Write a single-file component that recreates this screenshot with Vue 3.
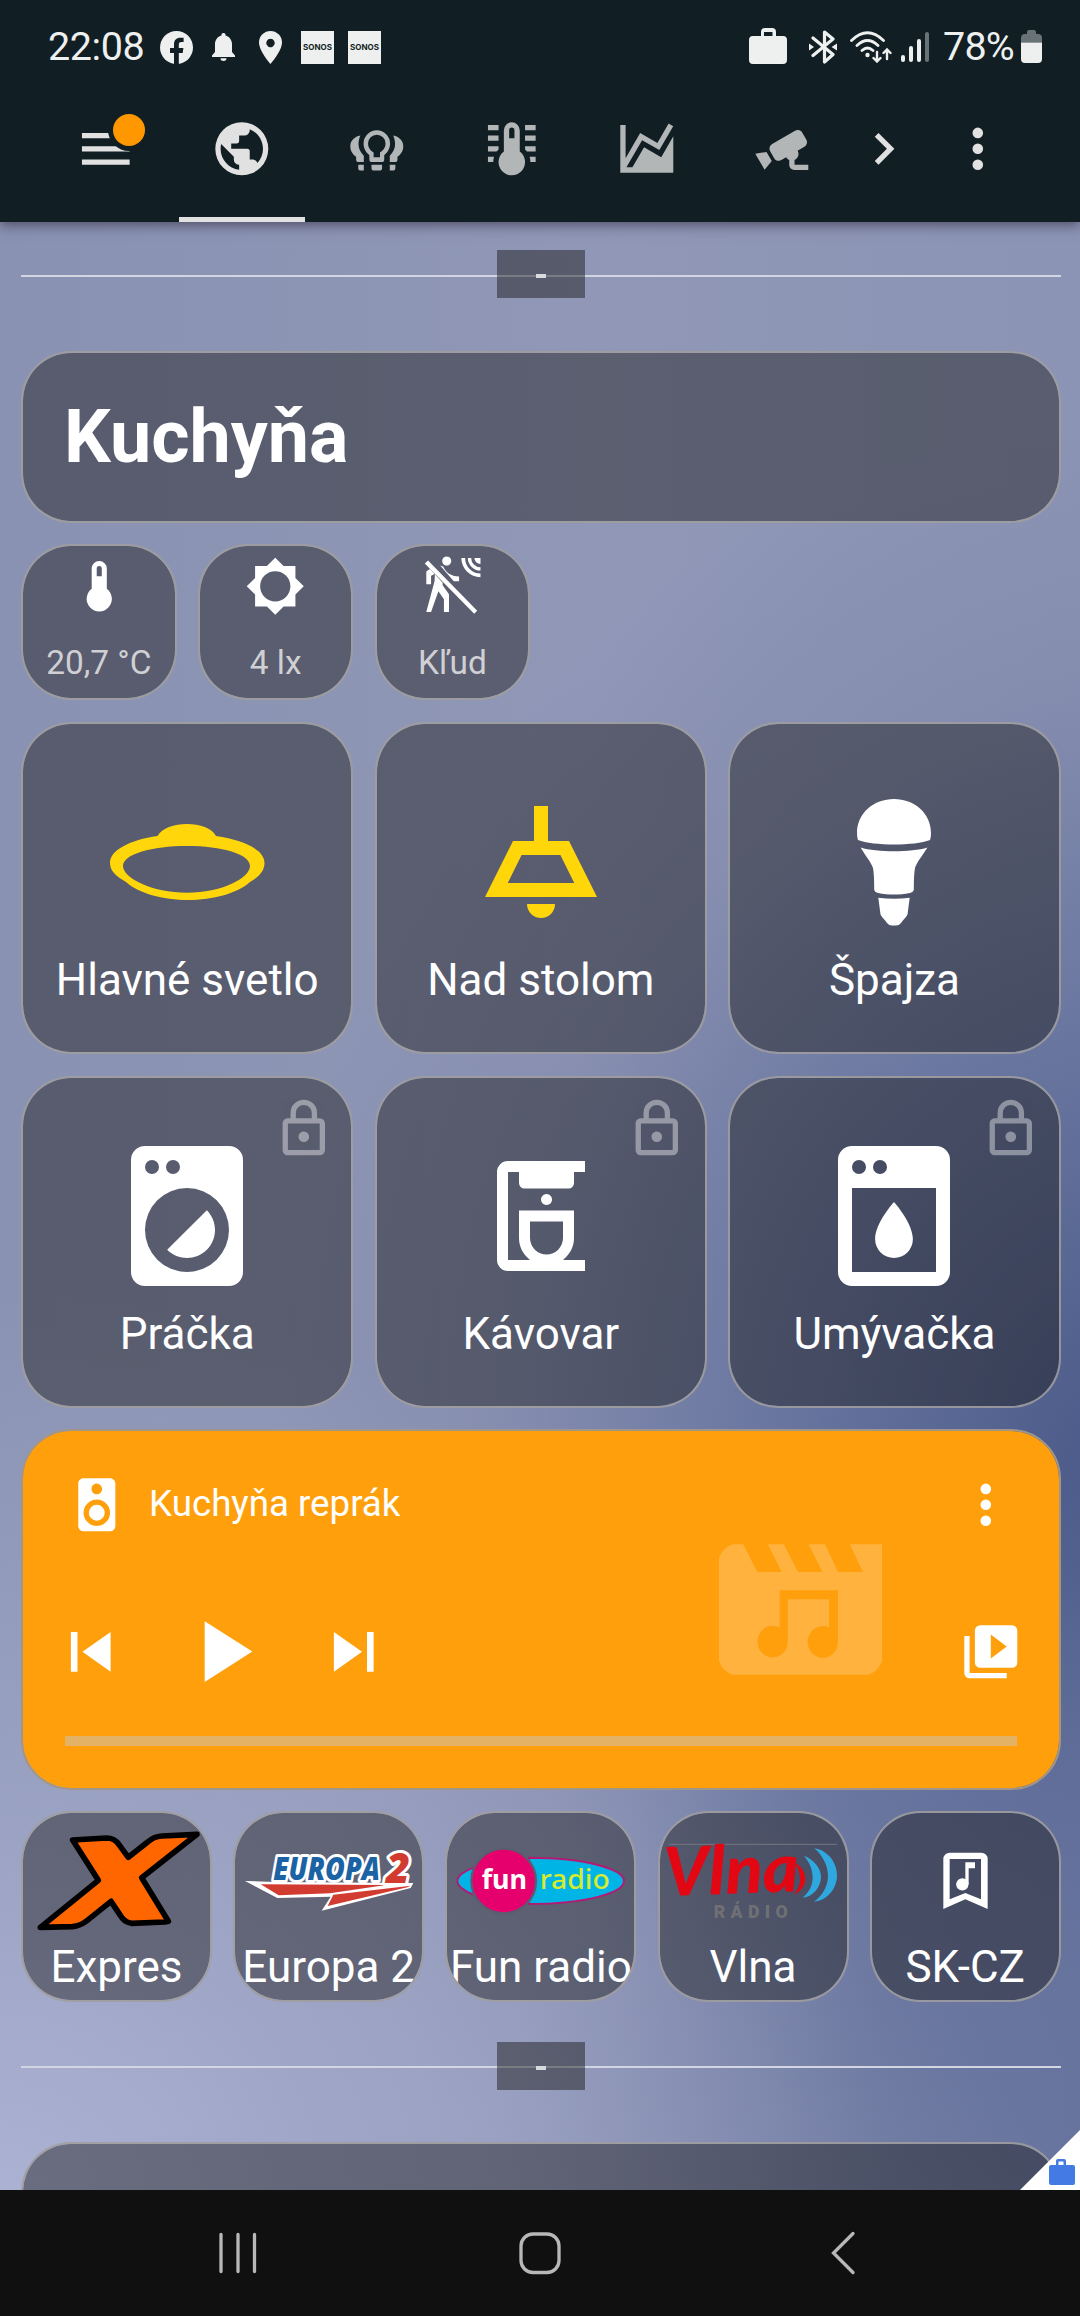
<script setup>
const icons = {
  menu: 'M3,6H21V8H3V6M3,11H21V13H3V11M3,16H21V18H3V16Z',
  earth: 'M17.9,17.39C17.64,16.59 16.89,16 16,16H15V13A1,1 0 0,0 14,12H8V10H10A1,1 0 0,0 11,9V7H13A2,2 0 0,0 15,5V4.59C17.93,5.77 20,8.64 20,12C20,14.08 19.2,15.97 17.9,17.39M11,19.93C7.05,19.44 4,16.08 4,12C4,11.38 4.08,10.78 4.21,10.21L9,15V16A2,2 0 0,0 11,18M12,2A10,10 0 0,0 2,12A10,10 0 0,0 12,22A10,10 0 0,0 22,12A10,10 0 0,0 12,2Z',
  bulbs: 'M12,5A5,5 0 0,0 7,10C7,12 8,13.4 9.2,14.4V16Q9.2,17 10.2,17H13.8Q14.8,17 14.8,16V14.4C16,13.4 17,12 17,10A5,5 0 0,0 12,5M12,6.7A3.3,3.3 0 0,1 15.3,10C15.3,11.6 14.3,12.7 13.2,13.4V15.2H10.8V13.4C9.7,12.7 8.7,11.6 8.7,10A3.3,3.3 0 0,1 12,6.7M10,18H14V19.2Q14,20.2 13,20.2H11Q10,20.2 10,19.2ZM5.8,7C3.6,7.4 2,9 2,11C2,13 3.2,14.3 4.2,15V16Q4.2,17 5.2,17H7.1V14.6C5.8,13.2 5.1,12 5.1,10.2C5.1,9 5.4,8 5.8,7M18.2,7C20.4,7.4 22,9 22,11C22,13 20.8,14.3 19.8,15V16Q19.8,17 18.8,17H16.9V14.6C18.2,13.2 18.9,12 18.9,10.2C18.9,9 18.6,8 18.2,7M5,18H7.1V20.2H6Q5,20.2 5,19.2ZM16.9,18H19V19.2Q19,20.2 18,20.2H16.9Z',
  thermoLines: 'M17,3H21V5H17V3M17,7H21V9H17V7M17,11H21V13H17.75L17,12.25V11M21,15V17H19C19,16.31 18.9,15.63 18.71,15H21M3,3H7V5H3V3M3,7H7V9H3V7M3,11H7V12.25L6.25,13H3V11M3,15H5.29C5.1,15.63 5,16.31 5,17H3V15M15,13V5A3,3 0 0,0 9,5V13A5,5 0 1,0 15,13M12,4A1,1 0 0,1 13,5V8H11V5A1,1 0 0,1 12,4Z',
  chart: 'M17.45,15.18L22,7.31V21H2V3H4V15.54L9.5,6L16,9.78L20.24,2.45L21.97,3.45L16.74,12.5L10.23,8.75L4.31,19H6.57L10.96,11.44L17.45,15.18Z',
  cctv: 'M18.15,4.94C17.77,4.91 17.37,5 17,5.2L8.35,10.2C7.39,10.76 7.07,12 7.62,12.94L9.12,15.53C9.67,16.5 10.89,16.82 11.85,16.27L13.65,15.23C13.92,15.69 14.32,16.06 14.81,16.27V18.04C14.81,19.13 15.7,20 16.81,20H22V18.04H16.81V16.27C17.72,15.87 18.31,14.97 18.31,14C18.31,13.54 18.19,13.11 17.97,12.73L20.5,11.27C21.47,10.71 21.8,9.5 21.24,8.53L19.74,5.94C19.4,5.34 18.79,5 18.15,4.94M6.22,13.17L2,13.87L2.75,15.17L4.75,18.63L5.5,19.93L8.22,16.63L6.22,13.17Z',
  chevron: 'M8.59,16.58L13.17,12L8.59,7.41L10,6L16,12L10,18L8.59,16.58Z',
  dots: 'M12,16A2,2 0 0,1 14,18A2,2 0 0,1 12,20A2,2 0 0,1 10,18A2,2 0 0,1 12,16M12,10A2,2 0 0,1 14,12A2,2 0 0,1 12,14A2,2 0 0,1 10,12A2,2 0 0,1 12,10M12,4A2,2 0 0,1 14,6A2,2 0 0,1 12,8A2,2 0 0,1 10,6A2,2 0 0,1 12,4Z',
  thermometer: 'M15,13V5A3,3 0 0,0 9,5V13A5,5 0 1,0 15,13M12,4A1,1 0 0,1 13,5V8H11V5A1,1 0 0,1 12,4Z',
  brightness: 'M12,18A6,6 0 0,1 6,12A6,6 0 0,1 12,6A6,6 0 0,1 18,12A6,6 0 0,1 12,18M20,15.31L23.31,12L20,8.69V4H15.31L12,0.69L8.69,4H4V8.69L0.69,12L4,15.31V20H8.69L12,23.31L15.31,20H20V15.31Z',
  motionOff: 'M9.8,0.2A1.8,1.8 0 1,0 9.81,0.2ZM2.4,1.8L21.9,21.7L20.7,22.9L1.1,3ZM3.1,5.2L5,7.1L3.6,7.8V11.2H1.7V6.1ZM5.1,7.2L8.2,10.6V11.6L10.7,15.2V22.2H8.7V17.2L6.5,14L3.6,22.2H1.7L5,9.9ZM7.2,3.8L8.4,4.2C9.5,6.6 11.4,8.1 14.7,8.1V10H12.6ZM15.6,0.8A7.6,7.6 0 0,0 23.2,8.4V6.9A6.1,6.1 0 0,1 17.1,0.8ZM18.2,0.8A5,5 0 0,0 23.2,5.8V4.5A3.7,3.7 0 0,1 19.5,0.8ZM20.8,0.8A2.4,2.4 0 0,0 23.2,3.2V0.8Z',
  ceiling: 'M8,9H11V4H13V9H16L20,17H4L8,9M9.23,11L7.25,15H16.75L14.77,11H9.23M10,18H14A2,2 0 0,1 10,18Z',
  washer: 'M14.83,11.17C16.39,12.73 16.39,15.27 14.83,16.83C13.27,18.39 10.73,18.39 9.17,16.83L14.83,11.17M6,2H18A2,2 0 0,1 20,4V20A2,2 0 0,1 18,22H6A2,2 0 0,1 4,20V4A2,2 0 0,1 6,2M7,4A1,1 0 0,0 6,5A1,1 0 0,0 7,6A1,1 0 0,0 8,5A1,1 0 0,0 7,4M10,4A1,1 0 0,0 9,5A1,1 0 0,0 10,6A1,1 0 0,0 11,5A1,1 0 0,0 10,4M12,8A6,6 0 0,0 6,14A6,6 0 0,0 12,20A6,6 0 0,0 18,14A6,6 0 0,0 12,8Z',
  coffee: 'M20,4V2H6A2,2 0 0,0 4,4V20A2,2 0 0,0 6,22H20V20H16C17.2,19 18,17.7 18,16V11H8V16C8,17.7 8.8,19 10,20H6V4H8V6A1,1 0 0,0 9,7H17A1,1 0 0,0 18,6V4H20ZM10,13H16V16A3,3 0 0,1 10,16V13M13,8A1,1 0 1,0 13.01,8Z',
  dishwasher: 'M18,2H6A2,2 0 0,0 4,4V20A2,2 0 0,0 6,22H18A2,2 0 0,0 20,20V4A2,2 0 0,0 18,2M10,4A1,1 0 0,1 11,5A1,1 0 0,1 10,6A1,1 0 0,1 9,5A1,1 0 0,1 10,4M7,4A1,1 0 0,1 8,5A1,1 0 0,1 7,6A1,1 0 0,1 6,5A1,1 0 0,1 7,4M18,20H6V8H18V20M12,10C12,10 9.3,13 9.3,15.3A2.7,2.7 0 0,0 14.7,15.3C14.7,13 12,10 12,10Z',
  lock: 'M12,17A2,2 0 0,1 10,15C10,13.89 10.89,13 12,13A2,2 0 0,1 14,15A2,2 0 0,1 12,17M18,20V10H6V20H18M18,8A2,2 0 0,1 20,10V20A2,2 0 0,1 18,22H6C4.89,22 4,21.1 4,20V10C4,8.89 4.89,8 6,8H7V6A5,5 0 0,1 12,1A5,5 0 0,1 17,6V8H18M12,3A3,3 0 0,0 9,6V8H15V6A3,3 0 0,0 12,3Z',
  speaker: 'M12,12A3,3 0 0,0 9,15A3,3 0 0,0 12,18A3,3 0 0,0 15,15A3,3 0 0,0 12,12M12,20A5,5 0 0,1 7,15A5,5 0 0,1 12,10A5,5 0 0,1 17,15A5,5 0 0,1 12,20M12,4A2,2 0 0,1 14,6A2,2 0 0,1 12,8C10.89,8 10,7.1 10,6C10,4.89 10.89,4 12,4M17,2H7C5.89,2 5,2.89 5,4V20A2,2 0 0,0 7,22H17A2,2 0 0,0 19,20V4C19,2.89 18.1,2 17,2Z',
  prev: 'M6,18V6H8V18H6M9.5,12L18,6V18L9.5,12Z',
  play: 'M8,5.14V19.14L19,12.14L8,5.14Z',
  next: 'M16,18H18V6H16M6,18L14.5,12L6,6V18Z',
  library: 'M4,6H2V20A2,2 0 0,0 4,22H18V20H4V6M20,2H8A2,2 0 0,0 6,4V16A2,2 0 0,0 8,18H20A2,2 0 0,0 22,16V4A2,2 0 0,0 20,2M12,14.5V5.5L18,10L12,14.5Z',
}

const tabs = [
  { icon: icons.earth, active: true },
  { icon: icons.bulbs },
  { icon: icons.thermoLines },
  { icon: icons.chart },
  { icon: icons.cctv },
]

const chips = [
  { icon: icons.thermometer, label: '20,7 °C' },
  { icon: icons.brightness, label: '4 lx' },
  { icon: icons.motionOff, label: 'Kľud' },
]

const tiles = [
  { kind: 'oval', label: 'Hlavné svetlo', on: true },
  { icon: icons.ceiling, label: 'Nad stolom', on: true },
  { kind: 'spot', label: 'Špajza' },
  { icon: icons.washer, label: 'Práčka', locked: true },
  { icon: icons.coffee, label: 'Kávovar', locked: true, small: true },
  { icon: icons.dishwasher, label: 'Umývačka', locked: true },
]

const stations = [
  { id: 'expres', label: 'Expres', box: '70 39 561 378' },
  { id: 'europa', label: 'Europa 2', box: '705 39 561 378' },
  { id: 'fun', label: 'Fun radio', box: '82 39 561 378' },
  { id: 'vlna', label: 'Vlna', box: '720 39 561 378' },
  { id: 'skcz', label: 'SK-CZ', box: '126 39 561 378' },
]
</script>

<template>
  <div class="screen">
    <header class="top">
      <div class="status">
        <span class="clock">22:08</span>
        <svg class="s-fb" viewBox="0 0 33 33"><circle cx="16.5" cy="16.5" r="16.5" fill="#eef0f0" /><path d="M14 34V22H10V17H14V13.5C14 9 16.5 6.8 20.3 6.8H23.6V11H21.5C19.3 11 18.8 12 18.8 13.8V17H23.4L22.7 22H18.8V34Z" fill="#111e23" /></svg>
        <svg class="s-bell" viewBox="0 0 23 28"><path d="M11.5 0A2 2 0 0 1 13.5 2.4C17.5 3.4 20 7 20 11V19L23 22.5V24H0V22.5L3 19V11C3 7 5.500 3.400 9.500 2.400A2 2 0 0 1 11.500 0ZM8.500 25.300H14.500A3 2.700 0 0 1 8.500 25.300Z" /></svg>
        <svg class="s-pin" viewBox="0 0 23 33"><path d="M11.500 0A11.500 11.500 0 0 0 0 11.500C0 20 11.500 33 11.500 33S23 20 23 11.500A11.500 11.500 0 0 0 11.500 0ZM11.500 7.800A4.200 4.200 0 1 1 11.490 7.800Z" fill-rule="evenodd" /></svg>
        <span v-for="n in 2" :key="n" class="sonos"><svg viewBox="0 0 33 33"><text x="2" y="19.200" textLength="29" lengthAdjust="spacingAndGlyphs">SONOS</text></svg></span>
        <span class="grow"></span>
        <svg class="s-case" viewBox="0 0 38 36"><path d="M4 8H12V4Q12 0 16 0H23Q27 0 27 4V8H34Q38 8 38 12V32Q38 36 34 36H4Q0 36 0 32V12Q0 8 4 8ZM15 8H23.500V4H15Z" fill-rule="evenodd" /></svg>
        <svg class="s-bt" viewBox="0 0 28 34"><path d="M4 8L24 24.500L15.500 32V2L24 9L4 25.500" fill="none" stroke="#eef0f0" stroke-width="3.200" stroke-linejoin="round" stroke-linecap="round" /><path d="M0 13.500L5 17L0 20.500ZM28 13.500L22.500 17L28 20.500Z" /></svg>
        <svg class="s-wifi" viewBox="0 0 42 32"><g fill="none" stroke="#eef0f0" stroke-width="2.800" stroke-linecap="round"><path d="M1.500 9.500Q17.500 -6 33.500 9.500M7 14.500Q17.500 4.500 28 14.500M12 19.500Q17.500 14.500 23 19.500" /><path d="M27 21V30M23.500 27L27 30.500L30.500 27M37 28V19M33.500 22L37 18.500L40.500 22" stroke-width="2.400" /></g><circle cx="17.500" cy="24" r="2.200" /></svg>
        <svg class="s-sig" viewBox="0 0 28 30"><rect y="23" width="4" height="7" rx="2" /><rect x="8" y="14" width="4" height="16" rx="2" /><rect x="16" y="7" width="4" height="23" rx="2" /><rect x="24" width="4" height="30" rx="2" opacity=".4" /></svg>
        <span class="pct">78%</span>
        <svg class="s-bat" viewBox="0 0 21 33"><path d="M6 2Q6 0 8 0H13Q15 0 15 2V4H17Q21 4 21 8V12.500H0V8Q0 4 4 4H6Z" opacity=".4" /><path d="M0 12.500H21V29Q21 33 17 33H4Q0 33 0 29Z" /></svg>
      </div>
      <nav class="tabs">
        <div class="menu"><svg class="ic" viewBox="0 0 24 24"><path :d="icons.menu" /></svg><i class="badge"></i></div>
        <div v-for="(t, i) in tabs" :key="i" class="tab" :class="{ active: t.active }"><svg class="ic" viewBox="0 0 24 24"><path :d="t.icon" /></svg></div>
        <div class="tool"><svg class="ic" viewBox="0 0 24 24"><path :d="icons.chevron" /></svg></div>
        <div class="tool"><svg class="ic" viewBox="0 0 24 24"><path :d="icons.dots" /></svg></div>
      </nav>
    </header>

    <main class="page">
      <div class="divider"><span><i></i></span></div>
      <section class="card title">Kuchyňa</section>
      <section class="chips">
        <div v-for="c in chips" :key="c.label" class="card chip">
          <svg viewBox="0 0 24 24"><path :d="c.icon" /></svg>
          <span>{{ c.label }}</span>
        </div>
      </section>
      <section class="tiles">
        <div v-for="t in tiles" :key="t.label" class="card tile" :class="{ on: t.on }">
          <div class="pic">
            <svg v-if="t.kind === 'oval'" width="155" height="76" viewBox="110 824 155 76"><path fill-rule="evenodd" d="M157.500 836C162 828 174 824 187 824C200 824 212 828 216 836C244 840 264.500 850 264.500 863C264.500 871 259 877 250 882C238 893 213 900 188 900C163 900 138 893 126 882C116 876 110 871 110 863C110 850 130 840 157.500 836ZM123 866C123 854 152 846 187 846C222 846 250 854 250 866C250 878 222 892.700 187 892.700C152 892.700 123 878 123 866Z" /></svg>
            <svg v-else-if="t.kind === 'spot'" width="74" height="128" viewBox="0 0 74 128"><path d="M1 42Q0 40 0 35C0 15 17 1 37 1C57 1 74 15 74 35Q74 40 73 42C58 48 16 48 1 42ZM3.600 49.500C20 54.500 54 54.500 70.500 49.500C65 58 60 64 58 70Q56.800 76 56.800 92Q56 94.500 53 95C42 97 32 97 21 95Q18 94.500 17.200 92Q17.200 76 16 70C14 64 8.600 58 3.600 49.500ZM21.300 99.800Q37 101.500 52.700 99.800L50.500 116.500C49 120 46 121.500 44 125Q42 127.500 39 127.500H35Q32 127.500 30 125C28 121.500 25 120 23.500 116.500Z" /></svg>
            <svg v-else :width="t.small ? 132 : 168" :height="t.small ? 132 : 168" viewBox="0 0 24 24"><path :d="t.icon" fill-rule="evenodd" /></svg>
          </div>
          <span>{{ t.label }}</span>
          <svg v-if="t.locked" class="lock" viewBox="0 0 24 24"><path :d="icons.lock" /></svg>
        </div>
      </section>

      <section class="card media">
        <svg class="art" viewBox="2 4 20 16"><path fill-rule="evenodd" d="M3.700,4H4.960L6.700,7.400H9.700L8,4H9.940L11.700,7.400H14.700L13,4H15L16.600,7.400H19.660L18.050,4H22V18.300Q21.600,19.600 20.300,20H3.700Q2.400,19.600 2,18.300V5.700Q2.400,4.400 3.700,4ZM9.440,9.640H16.600V16A1.860,1.950 0 1 1 15.500,14.200V10.750H10.450V16A1.860,1.950 0 1 1 9.440,14.200Z" /></svg>
        <div class="m-head">
          <svg class="ic" viewBox="0 0 24 24"><path :d="icons.speaker" /></svg>
          <span>Kuchyňa reprák</span>
          <svg class="ic" viewBox="0 0 24 24"><path :d="icons.dots" /></svg>
        </div>
        <div class="m-ctl">
          <svg width="79.500" height="79.500" viewBox="0 0 24 24"><path :d="icons.prev" /></svg>
          <svg class="m-play" width="104" height="104" viewBox="0 0 24 24"><path :d="icons.play" /></svg>
          <svg width="79.500" height="79.500" viewBox="0 0 24 24"><path :d="icons.next" /></svg>
          <svg class="ic m-lib" viewBox="0 0 24 24"><path :d="icons.library" /></svg>
        </div>
        <div class="m-bar"></div>
      </section>

      <section class="stations">
        <div v-for="s in stations" :key="s.id" class="card station">
          <svg :viewBox="s.box">
            <g v-if="s.id === 'expres'">
              <path d="M219 120L320 114Q345 114 358 134L386 172L444 126Q462 110 486 108L592 103L426 233L506 364L496 366L395 370Q372 366 362 346L334 304L262 362Q242 378 218 380L122 382L296 241Z" fill="#f60" stroke="#000" stroke-width="17" stroke-linejoin="round" />
            </g>
            <g v-else-if="s.id === 'europa'">
              <path d="M735 243L826 246L1240 249L1232 264L965 332L992 290L832 294Z" fill="#fff" />
              <path d="M782 253L1158 255L990 280L836 286ZM1000 284L1232 257L1222 262L983 318Z" fill="#d23b30" />
              <g class="eu" paint-order="stroke" stroke="#fff" stroke-linejoin="round">
                <text x="820" y="240" font-size="96" textLength="320" lengthAdjust="spacingAndGlyphs" fill="#1b63a5" stroke-width="18">EUROPA</text>
                <text x="1158" y="249" font-size="125" textLength="72" lengthAdjust="spacingAndGlyphs" fill="#d23b30" stroke-width="18">2</text>
              </g>
            </g>
            <g v-else-if="s.id === 'fun'">
              <path d="M113 243C113 228 135 212 162 203V284C135 275 113 258 113 243ZM328 173C500 173 613 208 613 243C613 278 500 312 328 312Z" fill="#00b5e5" stroke="#b31b73" stroke-width="6" />
              <circle cx="252" cy="243" r="97" fill="#e6006d" stroke="#5a5d70" stroke-width="7" />
              <text class="fun" x="186" y="267" font-size="82" font-weight="700" textLength="136" lengthAdjust="spacingAndGlyphs" fill="#fff">fun</text>
              <text class="fun" x="360" y="267" font-size="80" font-weight="500" textLength="210" lengthAdjust="spacingAndGlyphs" fill="#d7eb2e">radio</text>
            </g>
            <g v-else-if="s.id === 'vlna'">
              <path d="M747 133H1251" stroke="#75767d" stroke-width="3" />
              <text class="vlna" transform="translate(734 288) rotate(-2)" font-size="202" textLength="404" lengthAdjust="spacingAndGlyphs">Vlna</text>
              <path d="M1122 186Q1156 206 1156 238Q1154 270 1122 284Q1144 256 1140 232Q1138 206 1122 186Z" fill="#e30613" />
              <path d="M1152 167C1184 180 1203 206 1203 230C1203 260 1180 290 1148 293C1168 276 1178 256 1178 232C1178 208 1168 186 1152 167ZM1183 145C1226 152 1251 190 1251 226C1251 266 1222 302 1182 305C1208 286 1224 258 1224 228C1224 198 1208 166 1183 145Z" fill="#2fa8e0" />
              <text class="radio" x="881" y="353" font-size="53" textLength="222">RÁDIO</text>
            </g>
            <g v-else fill="#fff">
              <path fill-rule="evenodd" d="M340 327V177A19 19 0 0 1 359 158H454A19 19 0 0 1 473 177V327L406 298ZM359 177V298L406 279L453 298V177Z" />
              <circle cx="397" cy="253" r="18.500" /><path d="M406 187H435V205H416V253H406Z" />
            </g>
          </svg>
          <span>{{ s.label }}</span>
        </div>
      </section>
      <div class="divider second"><span><i></i></span></div>
      <section class="card title"></section>
      <div class="corner"><svg viewBox="0 0 60 60"><path d="M60 0V60H0Z" fill="#fff" /><path fill="#437ae4" fill-rule="evenodd" d="M31 35H36V31Q36 29 38 29H44Q46 29 46 31V35H53Q55 35 55 37V53Q55 55 53 55H31Q29 55 29 53V37Q29 35 31 35ZM38.500 35H43.500V31.500H38.500Z" /></svg></div>
    </main>

    <footer class="navbar">
      <svg viewBox="0 0 1080 126"><g fill="none" stroke="#b8b8b8" stroke-width="3.300" stroke-linecap="round"><path d="M221 44.500V81.500M238 44.500V81.500M254.500 44.500V81.500" /><rect x="521" y="44" width="38" height="38.500" rx="12" /><path d="M853 43.500L833.500 63L853 82.500" /></g></svg>
    </footer>
  </div>
</template>

<style>
body { margin: 0; }
</style>

<style scoped>
.screen {
  width: 1080px;
  height: 2316px;
  display: flex;
  flex-direction: column;
  overflow: hidden;
  font-family: Roboto, "Noto Sans", sans-serif;
  color: #fff;
}
.screen * { box-sizing: border-box; }
svg { display: block; fill: currentColor; flex: none; }
.ic { width: 63.6px; height: 63.6px; }

.top { height: 222px; flex: none; background: #111e23; color: #e1e1e1; position: relative; z-index: 2; box-shadow: 0 3px 12px rgba(40, 30, 50, .6); }
.status { height: 74px; padding: 20px 38px 0 48px; display: flex; align-items: flex-start; color: #eef0f0; }
.clock, .pct { font-size: 39.5px; line-height: 53px; letter-spacing: -.6px; white-space: nowrap; }
.clock { width: 112px; letter-spacing: -.4px; }
.pct { width: 78px; margin-left: 14px; letter-spacing: -.8px; }
.grow { flex: 1; }
.s-fb { width: 33px; height: 33px; margin-top: 11px; }
.s-bell { width: 23px; height: 28px; margin: 13px 0 0 19px; }
.s-pin { width: 23px; height: 33px; margin: 11px 0 0 24px; }
.sonos { width: 33px; height: 33px; margin: 11px 0 0 18.5px; background: #eef0f0; }
.sonos + .sonos { margin-left: 14px; }
.sonos text { font: 700 7.5px Inter, sans-serif; fill: #111e23; }
.s-case { width: 38px; height: 36px; margin: 8px 22px 0 0; }
.s-bt { width: 28px; height: 34px; margin: 10px 13px 0 0; }
.s-wifi { width: 42px; height: 32px; margin: 11px 9px 0 0; }
.s-sig { width: 28px; height: 30px; margin-top: 12px; }
.s-bat { width: 21px; height: 33px; margin-top: 10px; }

.tabs { height: 149px; display: grid; grid-template-columns: 173.8px repeat(5, 135.2px) 68px 119.6px; }
.tabs > div { display: flex; align-items: center; justify-content: center; position: relative; height: 149px; }
.tabs .menu { padding-left: 37.6px; }
.badge { position: absolute; left: 113px; top: 40px; width: 32px; height: 32px; border-radius: 50%; background: #ff9800; box-shadow: 0 0 0 5px #111e23; }
.tab svg { opacity: .78; }
.tab.active svg { opacity: 1; }
.tab.active::after { content: ""; position: absolute; left: 5px; bottom: 1px; width: 126px; height: 5px; background: #e1e1e1; }

.page {
  height: 1968px;
  flex: none;
  position: relative;
  overflow: hidden;
  padding: 28px 19.3px 0 21px;
  background:
    radial-gradient(ellipse 900px 950px at 0 2010px, #adb3d4 0%, rgba(173, 179, 212, .5) 42%, rgba(173, 179, 212, 0) 100%),
    radial-gradient(ellipse 620px 560px at 1120px 1920px, rgba(94, 108, 152, .75) 0%, rgba(94, 108, 152, .4) 50%, rgba(94, 108, 152, 0) 100%),
    radial-gradient(ellipse 860px 1040px at 1120px 1240px, #4a5988 0%, rgba(80, 96, 144, .6) 40%, rgba(110, 118, 158, .24) 74%, rgba(130, 138, 172, 0) 100%),
    linear-gradient(90deg, #8992b2 0%, #9097b7 55%, #8b94b4 100%);
}
.card {
  position: relative;
  border: 2px solid rgba(160, 157, 158, .85);
  border-radius: 50px;
  background: rgba(26, 26, 26, .45);
  background-clip: padding-box;
  overflow: hidden;
}
.divider { height: 48px; display: flex; justify-content: center; background: linear-gradient(#d2d6e2, #d2d6e2) 0 25px / 100% 2px no-repeat; }
.divider span { width: 88px; display: flex; align-items: center; justify-content: center; background: rgba(26, 26, 26, .48); }
.divider i { width: 10px; height: 4.5px; margin-top: 4px; background: #d9dadd; }
.divider.second { margin-top: 40px; background-position: 0 24px; }
.title { height: 172.500px; margin-top: 52.5px; padding: 0 41px; font-size: 73.6px; font-weight: 700; line-height: 169px; }
.divider.second + .title { margin-top: 52px; }

.chips { display: grid; grid-template-columns: repeat(6, 1fr); gap: 21.2px; margin-top: 21.3px; }
.chip { height: 156px; display: flex; flex-direction: column; align-items: center; padding-top: 9.3px; }
.chip svg { width: 60.5px; height: 60.5px; }
.chip span { margin-top: 26.5px; font-size: 33.4px; line-height: 40px; color: #d0d0d4; white-space: nowrap; }

.tiles { display: grid; grid-template-columns: repeat(3, 1fr); gap: 21.2px; margin-top: 21.4px; }
.tile { height: 332.8px; display: flex; flex-direction: column; align-items: center; padding-top: 54px; }
.pic { height: 168px; display: flex; align-items: center; }
.tile.on .pic { color: #ffd60a; }
.tile span, .station span { font-size: 44px; line-height: 52px; white-space: nowrap; }
.tile span { margin-top: 8.500px; }
.lock { position: absolute; right: 16px; top: 19.5px; width: 63.6px; height: 63.6px; opacity: .4; }

.media { height: 360.5px; margin-top: 21px; padding: 41.5px 41.5px 0; background-color: #ff9f0c; border-color: #a29689; }
.m-head { display: flex; align-items: center; height: 64px; }
.m-head span { flex: 1; margin: -3px 0 0 21px; font-size: 36.7px; }
.m-ctl { display: flex; align-items: center; height: 104px; margin: 62.5px 0 0 -13.5px; }
.m-play { margin: 0 39.500px; }
.m-lib { margin-left: auto; margin-right: -5px; }
.m-bar { height: 10px; margin: 32.5px 0 0 0; background: #e3b266; }
.art { position: absolute; left: 696px; top: 113px; width: 163px; height: 131px; opacity: .2; }

.stations { display: grid; grid-template-columns: repeat(5, minmax(0, 1fr)); gap: 21.2px; margin-top: 21.2px; }
.station { height: 191px; display: flex; flex-direction: column; align-items: center; }
.station svg { width: 187px; height: 126px; }
.station span { margin-top: 2px; }
.eu text { font-family: "Open Sans", sans-serif; font-weight: 800; font-style: italic; }
.fun { font-family: "Noto Sans", sans-serif; }
.vlna { font-family: Lato, sans-serif; font-weight: 900; font-style: italic; fill: #e30613; }
.radio { font-family: Roboto, sans-serif; font-weight: 900; fill: #707074; }
.corner { position: absolute; right: 0; bottom: 0; width: 60px; height: 60px; }

.navbar { height: 126px; flex: none; background: #101010; }
.navbar svg { width: 1080px; height: 126px; }
</style>
